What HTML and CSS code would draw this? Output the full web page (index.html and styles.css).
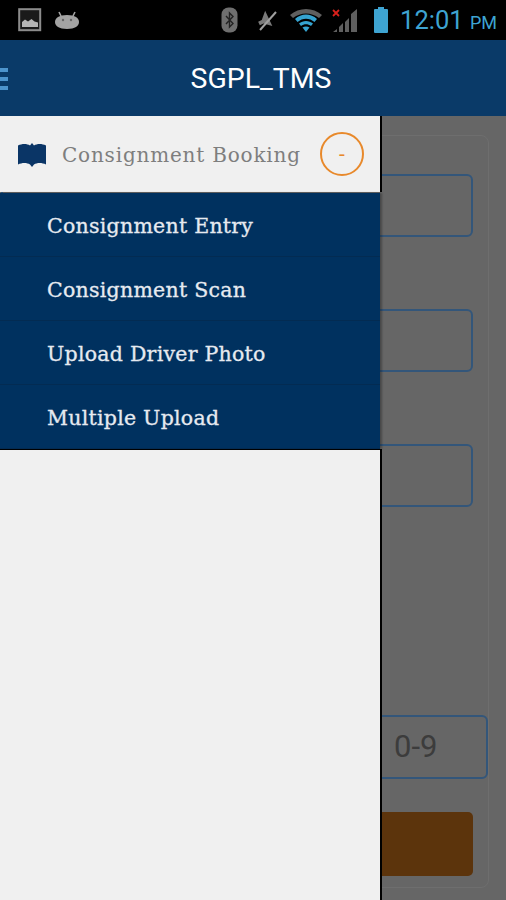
FILE: index.html
```html
<!DOCTYPE html>
<html lang="en">
<head>
    <meta charset="UTF-8">
    <meta name="viewport" content="width=device-width, initial-scale=1.0">
    <title>SGPL_TMS</title>
    <link rel="stylesheet" href="styles.css">
</head>
<body>
    <div class="screen">
        <div class="statusbar">
            <div class="status-left">
                <svg class="ic-picture" width="24" height="24" viewBox="0 0 24 24">
                    <rect x="1.2" y="1.2" width="21" height="21" fill="#1a1a1a" stroke="#8c8c8c" stroke-width="2"/>
                    <path d="M4 19v-5l3-2.500 3 2 3.500-2.500 3 2.500 3.500 1v4.500z" fill="#b5b5b5"/>
                </svg>
                <svg class="ic-android" width="26" height="20" viewBox="0 0 26 20">
                    <path d="M1 12c0-4 4-7 12-7s12 3 12 7-4 7-12 7-12-3-12-7z" fill="#a3a3a3"/>
                    <path d="M7 6 5 2M19 6l2-4" stroke="#a3a3a3" stroke-width="1.600"/>
                    <circle cx="9" cy="10" r="1.200" fill="#666"/>
                    <circle cx="17" cy="10" r="1.200" fill="#666"/>
                </svg>
            </div>
            <div class="status-right">
                <svg class="ic-bt" width="17" height="26" viewBox="0 0 17 26">
                    <rect x="0.500" y="0.500" width="16" height="25" rx="7" fill="#6f6f6f"/>
                    <path d="M5 9 12 16.500 8.500 20V6l3.500 3.500L5 17" fill="none" stroke="#222" stroke-width="1.400"/>
                </svg>
                <svg class="ic-mute" width="22" height="24" viewBox="0 0 22 24">
                    <path d="M2 11h4l7-7v17l-7-6H2z" fill="#7a7a7a" transform="rotate(-25 8 12)"/>
                    <path d="M4 22 20 4" stroke="#a0a0a0" stroke-width="2"/>
                </svg>
                <svg class="ic-wifi" width="32" height="26" viewBox="0 0 32 26">
                    <path d="M0 8C9 0 23 0 32 8l-3 3C21 5 11 5 3 11z" fill="#5f5f5f"/>
                    <path d="M5 12c6-6 16-6 22 0l-2.500 3c-5-4.500-12-4.500-17 0z" fill="#35a3d0"/>
                    <path d="M9 16.500c4-3.500 10-3.500 14 0l-2 2.500c-3-2.500-7-2.500-10 0z" fill="#35a3d0"/>
                    <path d="M12.500 20.500c2-1.500 5-1.500 7 0L16 25z" fill="#35a3d0"/>
                </svg>
                <svg class="ic-signal" width="27" height="26" viewBox="0 0 27 26">
                    <path d="M1 3 7 9M7 3 1 9" stroke="#d8201c" stroke-width="1.800"/>
                    <path d="M1 25h4v-3zM7 25h4v-9l-4 4zM13 25h4V11l-4 4zM19 25h6V2l-6 5z" fill="#5f5f5f"/>
                </svg>
                <svg class="ic-battery" width="16" height="26" viewBox="0 0 16 26">
                    <path d="M5 0h6v2h3a1 1 0 0 1 1 1v22a1 1 0 0 1-1 1H2a1 1 0 0 1-1-1V3a1 1 0 0 1 1-1h3z" fill="#3ea4d2"/>
                </svg>
                <span class="clock">12:01 <small>PM</small></span>
            </div>
        </div>

        <div class="appbar">
            <div class="burger"><i></i><i></i><i></i></div>
            <h1>SGPL_TMS</h1>
        </div>

        <!-- form behind the drawer -->
        <div class="page">
            <div class="card">
                <div class="field"></div>
                <div class="field"></div>
                <div class="field"></div>
                <div class="captcha">0-9</div>
                <div class="submit"></div>
            </div>
        </div>

        <div class="drawer">
            <div class="drawer-head">
                <svg class="ic-book" width="30" height="25" viewBox="0 0 30 25">
                    <path d="M1 3.500C5 1.500 10 1.500 13 3.500L15 1l2 2.500C20 1.500 25 1.500 29 3.500V22.500C25 20.500 20 20.500 17 22.500L15 25l-2-2.500C10 20.500 5 20.500 1 22.500z" fill="#0a3566"/>
                </svg>
                <span class="drawer-title">Consignment Booking</span>
                <span class="toggle">-</span>
            </div>
            <ul class="menu">
                <li>Consignment Entry</li>
                <li>Consignment Scan</li>
                <li>Upload Driver Photo</li>
                <li>Multiple Upload</li>
            </ul>
            <div class="drawer-rest"></div>
        </div>
    </div>
</body>
</html>
```

FILE: styles.css
```css
* {
    margin: 0;
    padding: 0;
    box-sizing: border-box;
}

body {
    background: #666;
    font-family: "DejaVu Serif", serif;
}

.screen {
    position: relative;
    width: 506px;
    height: 900px;
    overflow: hidden;
    background: #666;
}

/* Status bar */
.statusbar {
    height: 40px;
    background: #000;
    display: flex;
    justify-content: space-between;
    align-items: center;
    padding: 0 9px 0 18px;
}

.status-left, .status-right {
    display: flex;
    align-items: center;
}

.status-left {
    gap: 12px;
}

.ic-bt { margin-right: 18px; }
.ic-mute { margin-right: 12px; }
.ic-wifi { margin-right: 10px; }
.ic-signal { margin-right: 14px; }
.ic-battery { margin-right: 11px; }

.clock {
    font-family: Roboto, sans-serif;
    font-size: 25.500px;
    color: #3ea4d2;
    white-space: nowrap;
}

.clock small {
    font-size: 18px;
}

/* App bar */
.appbar {
    height: 76px;
    background: #0a3a68;
    display: flex;
    align-items: center;
    justify-content: center;
    position: relative;
}

.appbar h1 {
    font-family: Roboto, sans-serif;
    font-weight: 400;
    font-size: 28.400px;
    color: #fff;
    margin-left: 16px;
}

.burger {
    position: absolute;
    left: 0;
    top: 28px;
    width: 8px;
    display: flex;
    flex-direction: column;
    gap: 5px;
}

.burger i {
    display: block;
    height: 4px;
    background: #4d94cc;
}

/* Dimmed form */
.page {
    padding: 19px 17px 12px 0;
    height: 784px;
}

.card {
    height: 100%;
    margin-left: -20px;
    padding: 38px 15px 0 20px;
    border: 1px solid #6e6e6e;
    border-radius: 8px;
    display: flex;
    flex-direction: column;
    align-items: stretch;
}

.field {
    height: 63px;
    margin-bottom: 72px;
    border: 2px solid #33567a;
    border-radius: 6px;
}

.captcha {
    height: 64px;
    margin-top: 136px;
    margin-right: -15px;
    padding-left: 391px;
    border: 2px solid #33567a;
    border-radius: 6px;
    font-family: Roboto, sans-serif;
    font-size: 31px;
    line-height: 60px;
    color: #3c3c3c;
}

.submit {
    height: 64px;
    margin-top: 33px;
    background: #5c340c;
    border-radius: 5px;
}

/* Drawer over the form */
.drawer {
    position: absolute;
    left: 0;
    top: 116px;
    bottom: 0;
    width: 382px;
    display: flex;
    flex-direction: column;
}

.drawer-head {
    height: 76px;
    display: flex;
    align-items: center;
    padding-left: 17px;
    background: #f0f0f0;
    border-right: 2px solid #000;
}

.ic-book {
    margin-right: 15px;
}

.drawer-title {
    padding-top: 2px;
    font-size: 20px;
    letter-spacing: 0.800px;
    color: #7e7e7e;
    white-space: nowrap;
}

.toggle {
    width: 44px;
    height: 44px;
    margin-left: auto;
    margin-right: 16px;
    border: 2px solid #e8892b;
    border-radius: 50%;
    color: #e8892b;
    font-size: 20px;
    display: flex;
    align-items: center;
    justify-content: center;
}

.menu {
    list-style: none;
    width: 380px;
    margin-top: 1px;
    background: #00315f;
    box-shadow: 2px 0 2px rgba(0, 0, 0, 0.3);
}

.menu li {
    height: 64px;
    padding-left: 47px;
    font-size: 20.500px;
    letter-spacing: 0.250px;
    -webkit-text-stroke: 0.300px #e6eaf0;
    line-height: 66px;
    color: #e6eaf0;
    border-bottom: 1px solid #032b52;
    white-space: nowrap;
}

.drawer-rest {
    flex: 1;
    background: #f0f0f0;
    border-top: 1px solid #000;
    border-right: 2px solid #000;
}
```
